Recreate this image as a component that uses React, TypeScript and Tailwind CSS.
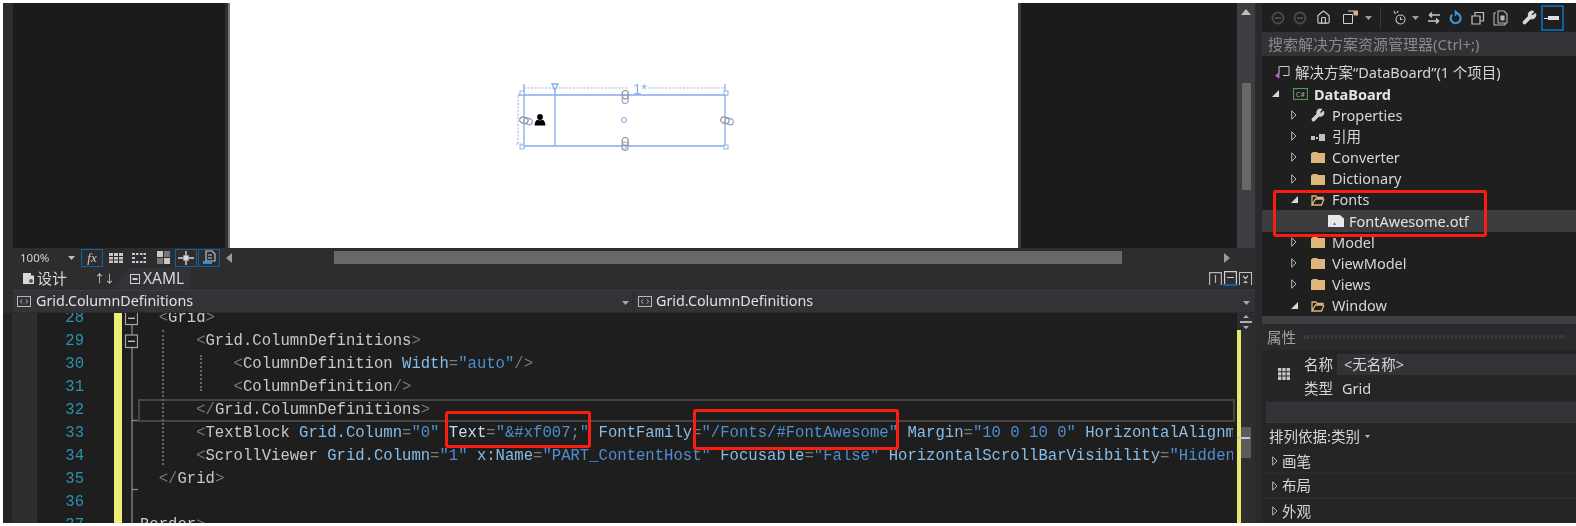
import type { ReactNode } from "react";
import { Wrench, Home } from "lucide-react";

const uiFont = { fontFamily: '"Noto Sans", "Noto Sans CJK SC", sans-serif' };

type Tok = [string, "p" | "n" | "a" | "v" | "t"];

const tokClass = {
  p: "text-[#7a7a7a]",
  n: "text-[#c8c8c8]",
  a: "text-[#88bde8]",
  v: "text-[#4d8fd0]",
  t: "text-[#c4dff5]",
};

type CodeLine = { no: number; fold: "box" | "line" | "end" | "none"; toks: Tok[]; current?: boolean };

const codeLines: CodeLine[] = [
  { no: 28, fold: "box", toks: [["  <", "p"], ["Grid", "n"], [">", "p"]] },
  { no: 29, fold: "box", toks: [["      <", "p"], ["Grid.ColumnDefinitions", "n"], [">", "p"]] },
  {
    no: 30,
    fold: "line",
    toks: [["          <", "p"], ["ColumnDefinition", "n"], [" Width", "a"], ["=", "p"], ['"auto"', "v"], ["/>", "p"]],
  },
  { no: 31, fold: "line", toks: [["          <", "p"], ["ColumnDefinition", "n"], ["/>", "p"]] },
  { no: 32, fold: "end", current: true, toks: [["      </", "p"], ["Grid.ColumnDefinitions", "n"], [">", "p"]] },
  {
    no: 33,
    fold: "line",
    toks: [
      ["      <", "p"],
      ["TextBlock", "n"],
      [" Grid.Column", "a"],
      ["=", "p"],
      ['"0"', "v"],
      [" Text", "t"],
      ["=", "p"],
      ['"&#xf007;"', "v"],
      [" FontFamily", "a"],
      ["=", "p"],
      ['"/Fonts/#FontAwesome"', "v"],
      [" Margin", "a"],
      ["=", "p"],
      ['"10 0 10 0"', "v"],
      [" HorizontalAlignment", "a"],
    ],
  },
  {
    no: 34,
    fold: "line",
    toks: [
      ["      <", "p"],
      ["ScrollViewer", "n"],
      [" Grid.Column", "a"],
      ["=", "p"],
      ['"1"', "v"],
      [" x:Name", "a"],
      ["=", "p"],
      ['"PART_ContentHost"', "v"],
      [" Focusable", "a"],
      ["=", "p"],
      ['"False"', "v"],
      [" HorizontalScrollBarVisibility", "a"],
      ["=", "p"],
      ['"Hidden"', "v"],
    ],
  },
  { no: 35, fold: "end", toks: [["  </", "p"], ["Grid", "n"], [">", "p"]] },
  { no: 36, fold: "line", toks: [] },
  { no: 37, fold: "line", toks: [["Border", "n"], [">", "p"]] },
];

function FoldCell({ kind }: { kind: CodeLine["fold"] }) {
  return (
    <div className="w-[16px] h-full shrink-0">
      <svg width="16" height="23" viewBox="0 0 16 23">
        <path d="M10 0V23" stroke="#8a8a8a" strokeWidth="1.3" />
        {kind === "box" && (
          <>
            <rect x="3.5" y="5" width="12" height="12.5" fill="#1e1e1e" stroke="#a8a8a8" strokeWidth="1.2" />
            <path d="M6 11.3H13" stroke="#c8c8c8" strokeWidth="1.3" />
          </>
        )}
        {kind === "end" && <path d="M10 21.5H16" stroke="#8a8a8a" strokeWidth="1.3" />}
      </svg>
    </div>
  );
}

function Code() {
  return (
    <div className="flex-1 min-h-0 flex bg-[#1e1e1e] overflow-hidden">
      <div className="w-[9px] bg-[#232323] shrink-0" />
      <div className="w-[25px] bg-[#2e2e2e] shrink-0" />
      <div
        className="relative flex-1 min-w-0 -mt-[6px] overflow-hidden text-[15.6px] leading-[23px]"
        style={{ fontFamily: '"Liberation Mono", monospace' }}
      >
        {codeLines.map((line) => (
          <div key={line.no} className="flex h-[23px]">
            <div className="w-[47px] shrink-0 text-right text-[#2b91af]">{line.no}</div>
            <div className="w-[30px] shrink-0" />
            <div className="w-[8px] shrink-0 bg-[#eeee77]" />
            <FoldCell kind={line.fold} />
            <div
              className={`flex-1 min-w-0 overflow-hidden whitespace-pre border-2 leading-[19px] ${
                line.current ? "border-[#454545]" : "border-transparent"
              }`}
            >
              {line.toks.map((t, i) => (
                <span key={i} className={tokClass[t[1]]}>
                  {t[0]}
                </span>
              ))}
            </div>
          </div>
        ))}
        {/* indent guides */}
        <div className="absolute left-[125px] top-[23px] h-[135px] border-l-2 border-dotted border-[#666]" />
        <div className="absolute left-[163px] top-[48px] h-[36px] border-l-2 border-dotted border-[#666]" />
        {/* red marks */}
        <div className="absolute left-[408px] top-[104px] w-[146px] h-[37px] border-[3px] border-[#fa1e10] rounded-[3px]" />
        <div className="absolute left-[656px] top-[102px] w-[206px] h-[41px] border-[3px] border-[#fa1e10] rounded-[3px]" />
      </div>
      <div className="w-[2px] shrink-0" />
      <div className="w-[18px] shrink-0 flex flex-col">
        <div className="h-[17px] flex items-center justify-center bg-[#2d2d30]">
          <svg width="14" height="14" viewBox="0 0 14 14" fill="#b0b0b0">
            <path d="M7 0l3 3H4zM7 14l-3-3h6zM1 6h12v2H1z" />
          </svg>
        </div>
        <div className="flex-1 flex">
          <div className="w-[4px] bg-[#e8e86f]" />
          <div className="flex-1 bg-[#2e2e30] relative">
            <div className="mt-[97px] w-[10px] h-[31px] bg-[#5a5a5c]" />
            <div className="absolute left-[-4px] top-[107px] w-[13px] h-[2px] bg-[#c8c8c8]" />
          </div>
        </div>
      </div>
    </div>
  );
}

function GridAdorners() {
  const chain = (cx: number, cy: number, vertical: boolean) => (
    <g transform={`translate(${cx} ${cy}) rotate(${vertical ? 90 : 15})`} fill="none">
      <rect x="-6.5" y="-3.2" width="8.500" height="6" rx="3" stroke="#8f8f8f" strokeWidth="1.2" />
      <rect x="-2" y="-3.2" width="8.500" height="6" rx="3" stroke="#8fa8d0" strokeWidth="1.2" />
    </g>
  );
  const square = (x: number, y: number) => (
    <rect x={x - 2} y={y - 2} width="4" height="4" fill="#fff" stroke="#8fb2ec" strokeWidth="1" />
  );
  return (
    <svg width="240" height="90" viewBox="504 70 240 90" className="shrink-0">
      <g stroke="#86abea" strokeWidth="1.3" fill="none">
        <path d="M518 95H727M524 146H727M524 84V148M725 84V148M555 88V146" />
        <path d="M524 88H628M648 88H724M518 96V144M516 144H524" strokeDasharray="2 1.5" strokeWidth="0.9" />
        <path d="M552 84h6l-3 6z" fill="#fff" />
        <circle cx="624" cy="120" r="2.6" strokeWidth="1" />
      </g>
      {square(522, 93)}
      {square(726, 93)}
      {square(522, 147)}
      {square(726, 147)}
      {square(624, 147)}
      {chain(625, 97, true)}
      {chain(625, 144, true)}
      {chain(526, 121, false)}
      {chain(727, 121, false)}
      <text x="633" y="94" fontSize="15" fill="#86abea" fontFamily="Liberation Sans, sans-serif">
        1*
      </text>
      <g fill="#000">
        <circle cx="540" cy="117" r="2.9" />
        <path d="M534.6 125.5c0-3.5 1.5-5.5 3-5.8 1.3.7 3.4.7 4.8 0 1.500.3 3 2.300 3 5.800z" />
      </g>
    </svg>
  );
}

function Designer() {
  return (
    <div className="h-[245px] shrink-0 flex bg-[#1b1b1b]">
      <div className="w-[10px] shrink-0 bg-[#2d2d30]" />
      <div className="w-[212px] shrink-0" />
      <div className="w-[3px] shrink-0 bg-[#2f2f31]" />
      <div className="w-[2px] shrink-0 bg-[#77777b]" />
      <div className="w-[788px] shrink-0 bg-white flex justify-center items-start pt-[67px]">
        <GridAdorners />
      </div>
      <div className="w-[3px] shrink-0 bg-[#3b3b3e]" />
      <div className="flex-1" />
      <div className="w-[18px] shrink-0 bg-[#3e3e42] flex flex-col items-center">
        <svg width="10" height="6" viewBox="0 0 10 6" className="mt-[6px]" fill="#bdbdbd">
          <path d="M5 0l5 6H0z" />
        </svg>
        <div className="mt-[68px] w-[9px] h-[107px] bg-[#686868]" />
      </div>
    </div>
  );
}

const ToolBox = ({ children, active, w = 22 }: { children: ReactNode; active?: boolean; w?: 16 | 22 }) => (
  <div
    className={`${w === 22 ? "w-[22px]" : "w-[16px]"} h-[18px] flex items-center justify-center shrink-0 ${
      active ? "border border-[#0e639c]" : ""
    }`}
  >
    {children}
  </div>
);

function TableIcon({ dashed }: { dashed?: boolean }) {
  return (
    <svg width="16" height="12" viewBox="0 0 16 12" fill="#c8c8c8">
      <path d={dashed ? "M1 1h3v2H1zM5 1h2.500v2H5zM9 1h2.500v2H9zM12.500 1H15v2h-2.500zM1 5h3v2H1zM12.500 5H15v2h-2.500zM1 9h3v2H1zM5 9h2.500v2H5zM9 9h2.500v2H9zM12.500 9H15v2h-2.500z" : "M1 1h4v3H1zM6 1h4v3H6zM11 1h4v3h-4zM1 5h4v2.500H1zM6 5h4v2.500H6zM11 5h4v2.500h-4zM1 8.500h4V11H1zM6 8.500h4V11H6zM11 8.500h4V11h-4z"} />
    </svg>
  );
}

function DesignToolbar() {
  return (
    <div className="ml-[10px] h-[19px] shrink-0 flex items-center bg-[#2d2d30] text-[#d0d0d0]" style={uiFont}>
      <span className="w-[55px] pl-[7px] text-[11.500px] leading-none">100%</span>
      <svg width="8" height="4" viewBox="0 0 8 4" fill="#bdbdbd" className="mr-[5px]">
        <path d="M0 0h7L3.500 4z" />
      </svg>
      <ToolBox active>
        <span className="text-[13px] italic leading-none" style={{ fontFamily: '"Liberation Serif", serif' }}>
          fx
        </span>
      </ToolBox>
      <div className="w-[5px]" />
      <ToolBox w={16}>
        <TableIcon />
      </ToolBox>
      <div className="w-[7px]" />
      <ToolBox w={16}>
        <TableIcon dashed />
      </ToolBox>
      <div className="w-[8px]" />
      <ToolBox w={16}>
        <svg width="13" height="13" viewBox="0 0 13 13">
          <path d="M0 0h6v6H0zM7 7h6v6H7z" fill="#c8c8c8" />
          <path d="M7 0h6v6H7zM0 7h6v6H0z" fill="#777" />
        </svg>
      </ToolBox>
      <div className="w-[4px]" />
      <ToolBox active>
        <svg width="16" height="14" viewBox="0 0 16 14" fill="none" stroke="#d8d8d8" strokeWidth="1.400">
          <path d="M0 7h5M11 7h5M8 0v4M8 10v4" />
          <rect x="6" y="5" width="4" height="4" fill="#d8d8d8" />
        </svg>
      </ToolBox>
      <div className="w-[1px]" />
      <ToolBox active>
        <svg width="14" height="15" viewBox="0 0 14 15" fill="none" stroke="#c8c8c8" strokeWidth="1.100">
          <path d="M4 1h6l3 3v7H4zM6 5h4M6 8h4" />
          <rect x="1" y="11" width="9" height="3" fill="#2f8fd8" stroke="none" />
        </svg>
      </ToolBox>
      <svg width="6" height="10" viewBox="0 0 6 10" fill="#9a9a9a" className="ml-[6px]">
        <path d="M6 0v10L0 5z" />
      </svg>
      <div className="w-[102px]" />
      <div className="w-[788px] h-[13px] bg-[#686868]" />
      <div className="flex-1 flex justify-end pr-[25px]">
        <svg width="6" height="10" viewBox="0 0 6 10" fill="#9a9a9a">
          <path d="M0 0v10l6-5z" />
        </svg>
      </div>
    </div>
  );
}

function TabRow() {
  return (
    <div className="ml-[10px] h-[24px] shrink-0 flex items-end bg-[#2d2d30] text-[#d6d6d6] border-b border-[#3e3e42]" style={uiFont}>
      <div className="flex items-center self-stretch pl-[10px] w-[74px] text-[15px] leading-none shrink-0">
        <svg width="11" height="11" viewBox="0 0 11 11" className="mr-[3px]">
          <path d="M0 0h8v2.500H11V11H0z" fill="#d8d8d8" />
          <circle cx="8" cy="8" r="2" fill="#555" />
        </svg>
        设计
      </div>
      <div className="flex items-center self-stretch w-[26px] pl-[7px] text-[#cfcfcf] text-[11px] leading-none tracking-[-1px] shrink-0">
        ↑↓
      </div>
      <div className="h-[22px] w-[77px] flex items-center bg-[#333337] pl-[17px] text-[15.500px] leading-none shrink-0 [clip-path:polygon(0_100%,15px_0,100%_0,100%_100%)]">
        <svg width="10" height="10" viewBox="0 0 10 10" className="mr-[3px] shrink-0" fill="none" stroke="#d0d0d0">
          <rect x=".5" y=".5" width="9" height="9" />
          <path d="M2.500 5h5" strokeWidth="2" />
        </svg>
        XAML
      </div>
      <div className="flex-1 self-stretch flex items-center justify-end pr-[3px] gap-[1px]">
        <svg width="13" height="13" viewBox="0 0 13 13" fill="none" stroke="#b5b5b5" strokeWidth="1.200">
          <path d="M.6 13V.6h11.800V13M6.500 3v8" />
        </svg>
        <div className="w-[15px] h-[15px] border-b-2 border-[#0e639c] flex items-start justify-center">
          <svg width="13" height="13" viewBox="0 0 13 13" fill="none" stroke="#d0d0d0" strokeWidth="1.200">
            <path d="M.6 13V.6h11.800V13M3 6.500h7" />
          </svg>
        </div>
        <svg width="13" height="13" viewBox="0 0 13 13" fill="#c0c0c0">
          <path d="M0 0h13v13h-1V1H1v12H0zM4 3l2.500 2.500L9 3v2L6.500 7.500 4 5zM4 11l2.500-2.500L9 11z" />
        </svg>
      </div>
    </div>
  );
}

function CrumbIcon() {
  return (
    <svg width="14" height="11" viewBox="0 0 14 11" fill="none" stroke="#b8b8b8" className="shrink-0">
      <rect x=".5" y=".5" width="13" height="10" />
      <path d="M5 3.500L3.500 5.500 5 7.500M9 3.500l1.500 2-1.500 2" />
    </svg>
  );
}

function Crumbs() {
  return (
    <div className="ml-[10px] h-[22px] shrink-0 flex bg-[#333337] text-[#e0e0e0] text-[14.300px] leading-none border-b border-[#2a2a2c]" style={uiFont}>
      <div className="w-[619px] flex items-center pl-[4px] gap-[5px] relative shrink-0">
        <CrumbIcon />
        Grid.ColumnDefinitions
        <svg width="7" height="4" viewBox="0 0 7 4" fill="#a8a8a8" className="absolute right-[3px] top-[10px]">
          <path d="M0 0h7L3.500 4z" />
        </svg>
      </div>
      <div className="w-[3px] shrink-0 border-x border-[#2a2a2c]" />
      <div className="flex-1 flex items-center pl-[3px] gap-[4px] relative">
        <CrumbIcon />
        Grid.ColumnDefinitions
        <svg width="7" height="4" viewBox="0 0 7 4" fill="#a8a8a8" className="absolute right-[5px] top-[10px]">
          <path d="M0 0h7L3.500 4z" />
        </svg>
      </div>
    </div>
  );
}

function Arrow({ open }: { open?: boolean }) {
  return open ? (
    <svg width="7" height="7" viewBox="0 0 7 7" fill="#d8d8d8" className="shrink-0">
      <path d="M7 0v7H0z" />
    </svg>
  ) : (
    <svg width="6" height="10" viewBox="0 0 6 10" fill="none" stroke="#b8b8b8" className="shrink-0">
      <path d="M.7.8v8.400L5 5z" />
    </svg>
  );
}

function Folder({ open }: { open?: boolean }) {
  return open ? (
    <svg width="14" height="12" viewBox="0 0 14 12" fill="none" stroke="#dcb67a" strokeWidth="1.300" className="shrink-0">
      <path d="M1 11V2h4l1 1.500h6V5H4.500L1 11h9.500L13 5" />
    </svg>
  ) : (
    <svg width="14" height="12" viewBox="0 0 14 12" fill="#dcb67a" className="shrink-0">
      <path d="M0 2.500L2 1h4l1 1h7v10H0z" />
    </svg>
  );
}

type TreeItem = {
  label: string;
  kind: "folder" | "open" | "props" | "ref" | "file";
  open?: boolean;
};

const treeItems: TreeItem[] = [
  { label: "Properties", kind: "props" },
  { label: "引用", kind: "ref" },
  { label: "Converter", kind: "folder" },
  { label: "Dictionary", kind: "folder" },
  { label: "Fonts", kind: "open", open: true },
  { label: "FontAwesome.otf", kind: "file" },
  { label: "Model", kind: "folder" },
  { label: "ViewModel", kind: "folder" },
  { label: "Views", kind: "folder" },
  { label: "Window", kind: "open", open: true },
];

function TreeRow({ item }: { item: TreeItem }) {
  if (item.kind === "file") {
    return (
      <div className="h-[21.2px] flex items-center pl-[66px] bg-[#3d3d40] text-[#e2e2e2]">
        <svg width="16" height="12" viewBox="0 0 16 12" className="mr-[5px] shrink-0">
          <path d="M0 0h12l4 3.500V12H0z" fill="#e8e8e8" />
          <path d="M5 10l1.500-3L8 10z" fill="#3f7fc0" />
        </svg>
        {item.label}
      </div>
    );
  }
  return (
    <div className="h-[21.2px] flex items-center pl-[29px] text-[#d6d6d6]">
      <div className="w-[20px] shrink-0 flex">
        <Arrow open={item.open} />
      </div>
      <div className="w-[21px] shrink-0 flex">
        {item.kind === "folder" && <Folder />}
        {item.kind === "open" && <Folder open />}
        {item.kind === "props" && <Wrench size={14} color="#d0d0d0" fill="#d0d0d0" />}
        {item.kind === "ref" && (
          <svg width="14" height="8" viewBox="0 0 14 8" fill="#c0c0c0" className="mt-[3px]">
            <path d="M0 2h4v4H0zM5 3h2v2H5zM8 0h6v7H8z" />
          </svg>
        )}
      </div>
      {item.label}
    </div>
  );
}

function TopIcons() {
  const circle = (
    <svg width="14" height="14" viewBox="0 0 14 14" fill="none" stroke="#4a4a4a" strokeWidth="2">
      <circle cx="7" cy="7" r="5.500" />
      <path d="M4 7h6" />
    </svg>
  );
  const caret = (
    <svg width="7" height="4" viewBox="0 0 7 4" fill="#a0a0a0">
      <path d="M0 0h7L3.500 4z" />
    </svg>
  );
  return (
    <div className="h-[29px] flex items-center pl-[9px] shrink-0">
      {circle}
      <div className="w-[8px]" />
      {circle}
      <div className="w-[9px]" />
      <Home size={15} color="#d0d0d0" strokeWidth={1.8} />
      <div className="w-[12px]" />
      <svg width="15" height="15" viewBox="0 0 15 15" fill="none" stroke="#d0d0d0">
        <path d="M.5 4.500h9v9h-9zM5 1h6v4" />
        <path d="M11 .5h4v5h-4z" fill="#dcb67a" stroke="none" />
      </svg>
      <div className="w-[7px]" />
      {caret}
      <div className="w-[8px]" />
      <div className="w-px h-[22px] bg-[#3c3c3f]" />
      <div className="w-[11px]" />
      <svg width="15" height="15" viewBox="0 0 15 15" fill="none" stroke="#c8c8c8" strokeWidth="1.100">
        <circle cx="8.500" cy="9.500" r="4.500" />
        <path d="M8.500 7v2.500h2M2 1l1.500 3M6 1l-1 2" />
      </svg>
      <div className="w-[5px]" />
      {caret}
      <div className="w-[8px]" />
      <svg width="14" height="14" viewBox="0 0 14 14" fill="none" stroke="#c8c8c8" strokeWidth="1.500">
        <path d="M13 4H3M5 1.500L2.500 4 5 6.500M1 10h10M9 7.500l2.500 2.500L9 12.500" />
      </svg>
      <div className="w-[7px]" />
      <svg width="15" height="15" viewBox="0 0 15 15" fill="none" stroke="#3a96dd" strokeWidth="2.200">
        <path d="M9 3.400a5 5 0 1 1-5 1.400" />
        <path d="M7 0v6l3-3z" fill="#3a96dd" strokeWidth="0.500" />
      </svg>
      <div className="w-[8px]" />
      <svg width="14" height="14" viewBox="0 0 14 14" fill="none" stroke="#c0c0c0" strokeWidth="1.200">
        <path d="M1 5h8v8H1zM4 5V1.500h8.500V10H9" />
      </svg>
      <div className="w-[8px]" />
      <svg width="16" height="16" viewBox="0 0 16 16" fill="none" stroke="#b8b8b8" strokeWidth="1.100">
        <path d="M3 3H1v12h11v-2M5 1h6l3 3v9H5z" />
        <path d="M8 6h3v4H8z" fill="#b8b8b8" />
      </svg>
      <div className="w-[13px]" />
      <Wrench size={15} color="#d8d8d8" fill="#d8d8d8" />
      <div className="w-[4px]" />
      <div className="w-[23px] h-[26px] border-2 border-[#0e639c] flex items-center justify-center">
        <svg width="17" height="6" viewBox="0 0 17 6" fill="#e0e0e0">
          <path d="M0 3h4v1H0zM4 1h11v4H4z" />
        </svg>
      </div>
    </div>
  );
}

function Solution() {
  return (
    <div className="relative h-[259px] shrink-0 text-[14.500px] leading-none pt-[5px] overflow-hidden">
      <div className="h-[21.2px] flex items-center pl-[13px] text-[#d6d6d6]">
        <svg width="15" height="13" viewBox="0 0 15 13" className="mr-[5px] shrink-0" fill="none" stroke="#c8c8c8">
          <path d="M4 7.500V.5h10v9H8" />
          <path d="M1 9l3-2v5L1 10z" fill="#a868c8" stroke="#a868c8" />
        </svg>
        解决方案“DataBoard”(1 个项目)
      </div>
      <div className="h-[21.2px] flex items-center pl-[9px] text-[#e4e4e4] font-bold">
        <div className="w-[22px] flex shrink-0 pl-[1px]">
          <Arrow open />
        </div>
        <svg width="15" height="12" viewBox="0 0 15 12" className="mr-[6px] shrink-0" fill="none" stroke="#4f9a4f">
          <rect x=".5" y=".5" width="14" height="11" strokeWidth="1.200" />
          <text x="3" y="8.500" fontSize="7" fill="#b0b0b0" stroke="none" fontWeight="400">
            C#
          </text>
        </svg>
        DataBoard
      </div>
      {treeItems.map((item) => (
        <TreeRow key={item.label} item={item} />
      ))}
      <div className="absolute left-[11px] top-[133px] w-[214px] h-[47px] border-[3px] border-[#fa1e10] rounded-[3px]" />
    </div>
  );
}

function Expander({ label, last }: { label: string; last?: boolean }) {
  return (
    <div className={`h-[25px] flex items-center pl-[10px] text-[#d6d6d6] ${last ? "" : "border-b-2 border-[#2a2a2c]"}`}>
      <div className="w-[10px] flex shrink-0">
        <Arrow />
      </div>
      {label}
    </div>
  );
}

function RightPanel() {
  return (
    <div className="w-[314px] shrink-0 flex flex-col bg-[#252526]" style={uiFont}>
      <div className="flex flex-col bg-[#1f1f20]">
        <TopIcons />
        <div className="h-[24px] mb-px flex items-center pl-[6px] bg-[#333337] text-[15px] leading-none text-[#8a8a8a] shrink-0">
          搜索解决方案资源管理器(Ctrl+;)
        </div>
        <Solution />
      </div>
      <div className="h-[8px] shrink-0 bg-[#3e3e42]" />
      <div className="h-[26px] shrink-0 flex items-center pl-[5px] bg-[#2a2a2c] text-[14.500px] leading-none text-[#a0a0a0]">
        属性
        <div className="ml-[8px] w-[260px] h-[4px] border-y-2 border-dotted border-[#3c3c3f]" />
      </div>
      <div className="flex-1 min-h-0 flex flex-col text-[14.500px] leading-none text-[#d6d6d6]">
        <div className="flex h-[52px] pt-[4px] shrink-0">
          <div className="w-[42px] pl-[16px] pt-[14px] shrink-0">
            <svg width="12" height="12" viewBox="0 0 12 12" fill="#c8c8c8">
              <path d="M0 0h3.300v3.300H0zM4.300 0h3.300v3.300H4.300zM8.600 0H12v3.300H8.600zM0 4.300h3.300v3.300H0zM4.300 4.300h3.300v3.300H4.300zM8.600 4.300H12v3.300H8.600zM0 8.600h3.300V12H0zM4.300 8.600h3.300V12H4.300zM8.600 8.600H12V12H8.600z" />
            </svg>
          </div>
          <div className="flex-1 min-w-0 flex flex-col">
            <div className="h-[21px] flex items-center">
              <span className="w-[33px] shrink-0">名称</span>
              <div className="flex-1 h-full flex items-center pl-[7px] bg-[#333337]">&lt;无名称&gt;</div>
            </div>
            <div className="h-[27px] flex items-center">
              <span className="w-[38px] shrink-0">类型</span>
              Grid
            </div>
          </div>
        </div>
        <div className="ml-[4px] h-[21px] shrink-0 bg-[#333337] border-y border-[#3a3a3d]" />
        <div className="h-[27px] shrink-0 flex items-center pl-[7px]">
          排列依据:类别
          <svg width="5" height="3" viewBox="0 0 5 3" fill="#c0c0c0" className="ml-[5px]">
            <path d="M0 0h5L2.500 3z" />
          </svg>
        </div>
        <Expander label="画笔" />
        <Expander label="布局" />
        <Expander label="外观" last />
      </div>
    </div>
  );
}

export default function App() {
  return (
    <div className="w-[1576px] h-[526px] overflow-hidden bg-white pt-[3px] pb-[3px] pl-[3px] flex blur-[0.35px]">
      <div className="w-[1252px] shrink-0 flex flex-col bg-[#2d2d30]">
        <Designer />
        <DesignToolbar />
        <TabRow />
        <Crumbs />
        <Code />
      </div>
      <div className="w-[7px] shrink-0 bg-[#2a2a2c]" />
      <RightPanel />
    </div>
  );
}
